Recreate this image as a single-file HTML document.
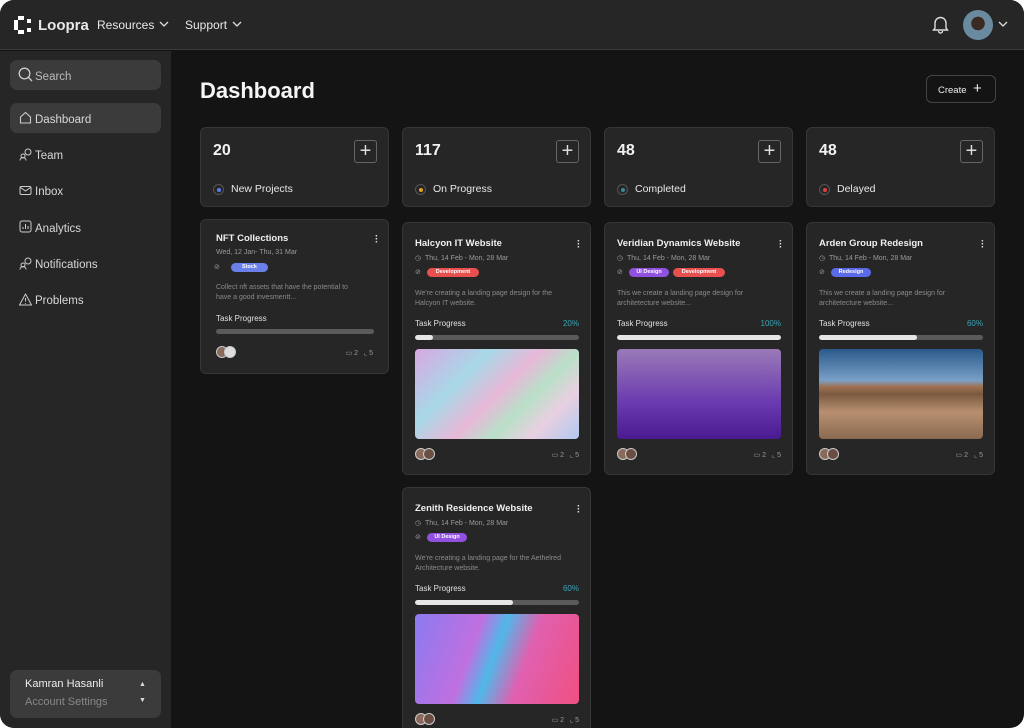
<!DOCTYPE html>
<html><head><meta charset="utf-8"><style>
*{box-sizing:border-box;margin:0;padding:0}
body{width:1024px;height:728px;background:#fff;font-family:"Liberation Sans",sans-serif;overflow:hidden;position:relative}
.win{position:absolute;left:0;top:0;width:1024px;height:728px;background:#141414;border-radius:14px;overflow:hidden}
.hdr{position:absolute;left:0;top:0;width:1024px;height:50px;background:#262626;border-bottom:1px solid #3a3a3a}
.side{position:absolute;left:0;top:51px;width:171px;height:677px;background:#262626}
.a{position:absolute}
.t{color:#e8e8e8}
.stat{position:absolute;top:127px;width:189px;height:80px;background:#262626;border:1px solid #363636;border-radius:6px}
.stat .n{position:absolute;left:12px;top:14px;font-size:16px;font-weight:bold;color:#f2f2f2}
.stat .pl{position:absolute;right:11px;top:12px;width:23px;height:23px;border:1px solid #666;border-radius:3px;color:#ddd;font-size:20px;line-height:20px;text-align:center}
.stat .dot{position:absolute;left:12px;top:56px;width:11px;height:11px;border:1px solid #555;border-radius:50%}
.stat .dot i{position:absolute;left:3px;top:3px;width:4px;height:4px;border-radius:50%}
.stat .l{position:absolute;left:30px;top:55px;font-size:10.5px;color:#e8e8e8}
.card{position:absolute;width:189px;background:#262626;border:1px solid #363636;border-radius:6px}
.card .ti{position:absolute;left:12px;font-size:9.5px;font-weight:bold;color:#f0f0f0}
.card .dots{position:absolute;right:10px;width:3px;font-size:10px;color:#ddd;line-height:3px;font-weight:bold}
.card .dt{position:absolute;left:12px;font-size:7px;color:#9a9a9a}
.card .tag{position:absolute;height:9px;border-radius:5px;font-size:5.5px;color:#fff;line-height:9px;text-align:center;font-weight:bold}
.card .ds{position:absolute;left:12px;font-size:7px;color:#8a8a8a;line-height:10px;width:150px}
.card .tp{position:absolute;left:12px;font-size:8px;color:#e0e0e0}
.card .pc{position:absolute;right:11px;font-size:8px;color:#3aa6b8}
.card .bar{position:absolute;left:12px;width:164px;height:5px;border-radius:3px;background:#5a5a5a;overflow:hidden}
.card .bar i{display:block;height:5px;background:#e6e6e6;border-radius:3px}
.card .img{position:absolute;left:12px;width:164px;height:90px;border-radius:4px}
.card .av{position:absolute;left:12px;width:12px;height:12px;border-radius:50%;border:1px solid #ccc;background:#8a6a5a}
.card .av2{left:20px;background:#6a4e44}
.card .ft{position:absolute;right:11px;font-size:7px;color:#999}
.ic{position:absolute;left:19px;width:13px;height:13px}
.nav{position:absolute;left:35px;font-size:11.5px;color:#d8d8d8}
</style></head><body><div class="win">
<div class="hdr">
 <svg class="a" style="left:14px;top:16px" width="18" height="18" viewBox="0 0 18 18" fill="#fff"><rect x="4" y="0" width="6" height="4"/><rect x="0" y="4" width="4" height="10"/><rect x="4" y="14" width="6" height="4"/><rect x="13" y="3" width="4" height="4"/><rect x="13" y="12" width="4" height="4"/></svg>
 <div class="a t" style="left:38px;top:17px;font-size:15px;font-weight:bold">Loopra</div>
 <div class="a t" style="left:97px;top:18px;font-size:12px">Resources</div>
 <svg class="a" style="left:159px;top:21px" width="10" height="7"><path d="M1 1l4 4 4-4" stroke="#ddd" fill="none" stroke-width="1.3"/></svg>
 <div class="a t" style="left:185px;top:18px;font-size:12px">Support</div>
 <svg class="a" style="left:232px;top:21px" width="10" height="7"><path d="M1 1l4 4 4-4" stroke="#ddd" fill="none" stroke-width="1.3"/></svg>
 <svg class="a" style="left:932px;top:15px" width="17" height="19" viewBox="0 0 17 19"><path d="M3 13V8a5.5 5.5 0 0111 0v5l1.5 2h-14z M6.5 16a2 2 0 004 0" stroke="#ddd" fill="none" stroke-width="1.4"/></svg>
 <div class="a" style="left:963px;top:10px;width:30px;height:30px;border-radius:50%;background:radial-gradient(circle at 50% 45%,#3a2a22 0 30%,#6a8aa0 31% 100%)"></div>
 <svg class="a" style="left:998px;top:21px" width="10" height="7"><path d="M1 1l4 4 4-4" stroke="#ddd" fill="none" stroke-width="1.3"/></svg>
</div>
<div class="side">
 <div class="a" style="left:10px;top:9px;width:151px;height:30px;background:#3b3b3b;border-radius:7px"></div>
 <svg class="a" style="left:18px;top:16px" width="15" height="15"><circle cx="6.5" cy="6.5" r="5.3" stroke="#ccc" fill="none" stroke-width="1.3"/><path d="M10.5 10.5l3.5 3.5" stroke="#ccc" stroke-width="1.3"/></svg>
 <div class="nav" style="top:17px;color:#bbb">Search</div>
 <div class="a" style="left:10px;top:52px;width:151px;height:30px;background:#3b3b3b;border-radius:7px"></div>
 <svg class="ic" style="top:60px" viewBox="0 0 13 13"><path d="M1.5 6L6.5 1.5 11.5 6V12H1.5z" stroke="#ccc" fill="none" stroke-width="1.1"/></svg>
 <div class="nav" style="top:60px">Dashboard</div>
 <svg class="ic" style="top:97px" viewBox="0 0 13 13"><circle cx="4" cy="8" r="2" stroke="#ccc" fill="none"/><path d="M1 12.5a3 3 0 016 0" stroke="#ccc" fill="none"/><circle cx="9" cy="4" r="3" stroke="#ccc" fill="none"/></svg>
 <div class="nav" style="top:96px">Team</div>
 <svg class="ic" style="top:133px" viewBox="0 0 13 13"><rect x="1" y="2.5" width="11" height="8" rx="1.5" stroke="#ccc" fill="none"/><path d="M1.5 3.5l5 3.5 5-3.5" stroke="#ccc" fill="none"/></svg>
 <div class="nav" style="top:132px">Inbox</div>
 <svg class="ic" style="top:169px" viewBox="0 0 13 13"><rect x="1" y="1" width="11" height="11" rx="2" stroke="#ccc" fill="none"/><path d="M4 9V7M6.5 9V4M9 9V6" stroke="#ccc"/></svg>
 <div class="nav" style="top:169px">Analytics</div>
 <svg class="ic" style="top:206px" viewBox="0 0 13 13"><circle cx="4" cy="8" r="2" stroke="#ccc" fill="none"/><path d="M1 12.5a3 3 0 016 0" stroke="#ccc" fill="none"/><circle cx="9" cy="4" r="3" stroke="#ccc" fill="none"/></svg>
 <div class="nav" style="top:205px">Notifications</div>
 <svg class="ic" style="top:242px" viewBox="0 0 13 13"><path d="M6.5 1L12.5 12H0.5z" stroke="#ccc" fill="none" stroke-linejoin="round"/><path d="M6.5 5v3.5M6.5 10v.8" stroke="#ccc"/></svg>
 <div class="nav" style="top:241px">Problems</div>
 <div class="a" style="left:10px;top:619px;width:151px;height:48px;background:#3b3b3b;border-radius:7px"></div>
 <div class="a" style="left:25px;top:627px;font-size:11px;color:#eee">Kamran Hasanli</div>
 <div class="a" style="left:25px;top:645px;font-size:11px;color:#888">Account Settings</div>
 <div class="a" style="left:139px;top:630px;font-size:7px;color:#ddd">▲</div>
 <div class="a" style="left:139px;top:646px;font-size:7px;color:#ddd">▼</div>
</div>
<style>.side .nav{margin-top:3px}</style>
<div class="a" style="left:200px;top:78px;font-size:22px;font-weight:bold;color:#f5f5f5">Dashboard</div>
<div class="a" style="left:926px;top:75px;width:70px;height:28px;border:1px solid #444;border-radius:6px;font-size:9.5px;color:#eee;padding:9px 0 0 11px">Create <span style="font-size:15px;position:absolute;left:46px;top:4px">+</span></div>

<div class="stat" style="left:200px"><div class="n">20</div><div class="pl">+</div><div class="dot"><i style="background:#5a7ff0"></i></div><div class="l">New Projects</div></div>
<div class="stat" style="left:402px"><div class="n">117</div><div class="pl">+</div><div class="dot"><i style="background:#e8a020"></i></div><div class="l">On Progress</div></div>
<div class="stat" style="left:604px"><div class="n">48</div><div class="pl">+</div><div class="dot"><i style="background:#3a8a9a"></i></div><div class="l">Completed</div></div>
<div class="stat" style="left:806px"><div class="n">48</div><div class="pl">+</div><div class="dot"><i style="background:#e04040"></i></div><div class="l">Delayed</div></div>

<div class="card" style="left:200px;top:219px;height:155px">
 <div class="ti" style="left:15px;top:13px">NFT Collections</div><div class="dots" style="top:15px">·<br>·<br>·</div>
 <div class="dt" style="left:15px;top:29px">Wed, 12 Jan- Thu, 31 Mar</div>
 <div class="dt" style="left:13px;top:43px">⊘</div>
 <div class="tag" style="left:30px;top:43px;width:37px;background:#6a80e8">Stock</div>
 <div class="ds" style="left:15px;top:63px;width:145px">Collect nft assets that have the potential to have a good invesmentt...</div>
 <div class="tp" style="left:15px;top:94px">Task Progress</div>
 <div class="bar" style="left:15px;top:109px;width:158px"></div>
 <div class="av" style="left:15px;top:126px"></div><div class="av" style="left:23px;top:126px;background:#ddd"></div>
 <div class="ft" style="top:129px;right:15px">▭ 2 &nbsp; ⌞ 5</div>
</div>

<div class="card" style="left:402px;top:222px;height:253px">
 <div class="ti" style="top:15px">Halcyon IT Website</div><div class="dots" style="top:17px">·<br>·<br>·</div>
 <div class="dt" style="top:31px">◷ &nbsp;Thu, 14 Feb - Mon, 28 Mar</div>
 <div class="dt" style="top:45px">⊘</div>
 <div class="tag" style="left:24px;top:45px;width:52px;background:#e85050">Development</div>
 <div class="ds" style="top:66px">We're creating a landing page design for the Halcyon IT website.</div>
 <div class="tp" style="top:96px">Task Progress</div><div class="pc" style="top:96px">20%</div>
 <div class="bar" style="top:112px"><i style="width:18px"></i></div>
 <div class="img" style="top:126px;background:linear-gradient(135deg,#d8a8e0,#a8d8e8 30%,#e8b8d8 50%,#b8e0c8 65%,#e8d0e0 80%,#b0c8f0)"></div>
 <div class="av" style="top:225px"></div><div class="av av2" style="top:225px"></div>
 <div class="ft" style="top:228px">▭ 2 &nbsp; ⌞ 5</div>
</div>

<div class="card" style="left:604px;top:222px;height:253px">
 <div class="ti" style="top:15px">Veridian Dynamics Website</div><div class="dots" style="top:17px">·<br>·<br>·</div>
 <div class="dt" style="top:31px">◷ &nbsp;Thu, 14 Feb - Mon, 28 Mar</div>
 <div class="dt" style="top:45px">⊘</div>
 <div class="tag" style="left:24px;top:45px;width:40px;background:#9050e0">UI Design</div>
 <div class="tag" style="left:68px;top:45px;width:52px;background:#e85050">Development</div>
 <div class="ds" style="top:66px">This we create a landing page design for architetecture website...</div>
 <div class="tp" style="top:96px">Task Progress</div><div class="pc" style="top:96px">100%</div>
 <div class="bar" style="top:112px"><i style="width:164px"></i></div>
 <div class="img" style="top:126px;background:linear-gradient(180deg,#9a7ab8,#6a3ab0 60%,#4a1a90)"></div>
 <div class="av" style="top:225px"></div><div class="av av2" style="top:225px"></div>
 <div class="ft" style="top:228px">▭ 2 &nbsp; ⌞ 5</div>
</div>

<div class="card" style="left:806px;top:222px;height:253px">
 <div class="ti" style="top:15px">Arden Group Redesign</div><div class="dots" style="top:17px">·<br>·<br>·</div>
 <div class="dt" style="top:31px">◷ &nbsp;Thu, 14 Feb - Mon, 28 Mar</div>
 <div class="dt" style="top:45px">⊘</div>
 <div class="tag" style="left:24px;top:45px;width:40px;background:#5a6ae8">Redesign</div>
 <div class="ds" style="top:66px">This we create a landing page design for architetecture website...</div>
 <div class="tp" style="top:96px">Task Progress</div><div class="pc" style="top:96px">60%</div>
 <div class="bar" style="top:112px"><i style="width:98px"></i></div>
 <div class="img" style="top:126px;background:linear-gradient(180deg,#2a5a8a,#7aa0c8 35%,#a07050 42%,#7a5a40 50%,#b89070 70%,#8a6a50)"></div>
 <div class="av" style="top:225px"></div><div class="av av2" style="top:225px"></div>
 <div class="ft" style="top:228px">▭ 2 &nbsp; ⌞ 5</div>
</div>

<div class="card" style="left:402px;top:487px;height:260px">
 <div class="ti" style="top:15px">Zenith Residence Website</div><div class="dots" style="top:17px">·<br>·<br>·</div>
 <div class="dt" style="top:31px">◷ &nbsp;Thu, 14 Feb - Mon, 28 Mar</div>
 <div class="dt" style="top:45px">⊘</div>
 <div class="tag" style="left:24px;top:45px;width:40px;background:#9050e0">UI Design</div>
 <div class="ds" style="top:66px">We're creating a landing page for the Aethelred Architecture website.</div>
 <div class="tp" style="top:96px">Task Progress</div><div class="pc" style="top:96px">60%</div>
 <div class="bar" style="top:112px"><i style="width:98px"></i></div>
 <div class="img" style="top:126px;background:linear-gradient(110deg,#8a7af0,#c070e0 35%,#50b8e8 48%,#e060b0 65%,#f05080)"></div>
 <div class="av" style="top:225px"></div><div class="av av2" style="top:225px"></div>
 <div class="ft" style="top:228px">▭ 2 &nbsp; ⌞ 5</div>
</div>
</div></body></html>
